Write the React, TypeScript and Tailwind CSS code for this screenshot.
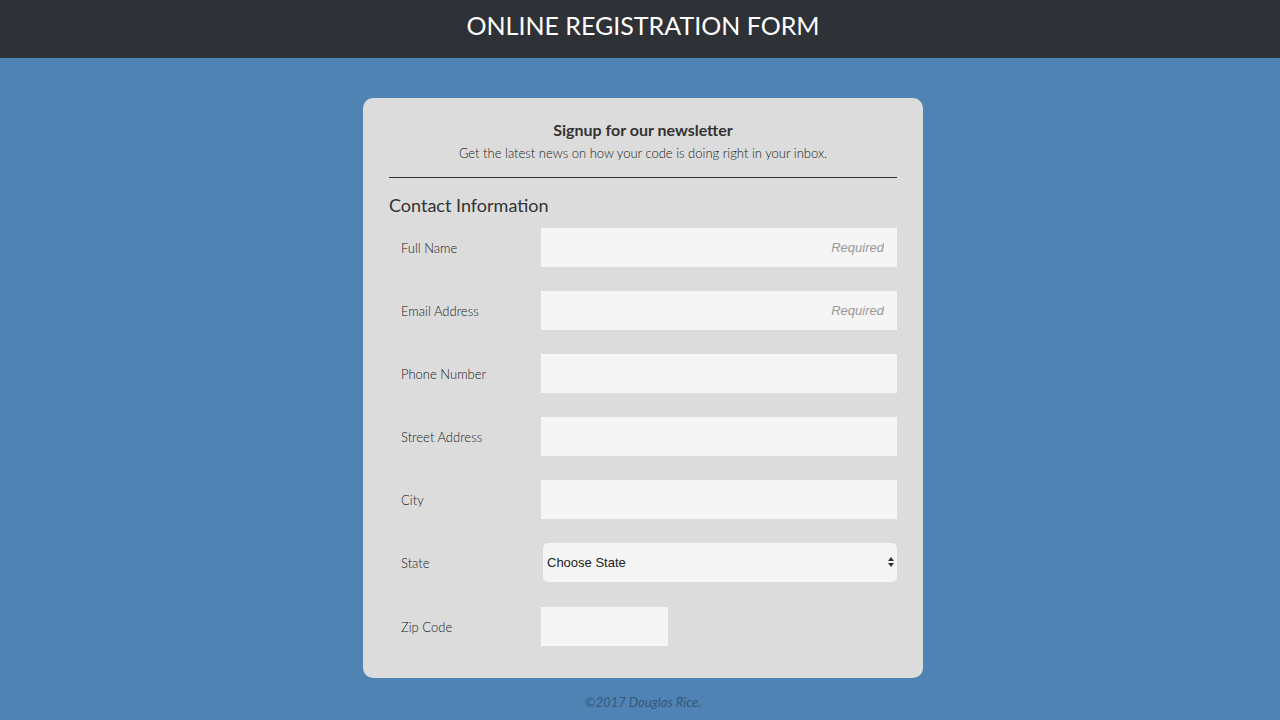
import React from "react";

const fields = [
  { label: "Full Name", required: true },
  { label: "Email Address", required: true },
  { label: "Phone Number" },
  { label: "Street Address" },
  { label: "City" },
];

export default function App() {
  return (
    <div className="min-h-screen bg-[#4f83b3] font-['Lato',sans-serif]">
      {/* header */}
      <div className="h-[58px] bg-[#2e3135] flex items-center justify-center pb-[7px] pl-[6px]">
        <h1 className="text-white text-[25px] leading-none">ONLINE REGISTRATION FORM</h1>
      </div>

      {/* card */}
      <div className="pt-10 pl-[6px] flex flex-col items-center">
        <div className="w-[560px] bg-[#dcdcdc] rounded-[10px] px-[26px] pt-[22px] pb-[32px]">
          <div className="text-center text-[#333]">
            <h2 className="font-bold text-[16px] leading-5">Signup for our newsletter</h2>
            <p className="text-[13px] leading-5 mt-[3px] font-light text-[#222]">Get the latest news on how your code is doing right in your inbox.</p>
          </div>
          <div className="border-t border-[#333] mt-[14px]" />
          <h3 className="text-[18px] text-[#333] mt-[16px] leading-[22px]">Contact Information</h3>

          <div className="mt-[12px] flex flex-col gap-6">
            {fields.map((f) => (
              <div key={f.label} className="flex items-center">
                <label className="w-[152px] pl-3 pt-[2px] text-[13px] font-light text-[#222]">{f.label}</label>
                <input
                  className="w-[356px] h-[39px] bg-[#f5f5f5] outline-none px-[13px] text-right text-[13px] italic font-['Liberation_Sans',sans-serif] placeholder:text-[#999]"
                  placeholder={f.required ? "Required" : ""}
                />
              </div>
            ))}
            <div className="flex items-center">
              <label className="w-[152px] pl-3 pt-[2px] text-[13px] font-light text-[#222]">State</label>
              <div className="relative ml-[2px] w-[354px] h-[39px] bg-[#f5f5f5] rounded-[5px] flex items-center">
                <span className="pl-[4px] text-[13px] text-[#222] font-['Liberation_Sans',sans-serif]">Choose State</span>
                <svg className="absolute right-[3px] top-[13px]" width="6" height="12" viewBox="0 0 6 12">
                  <path d="M3 1 L6 5 L0 5 Z M0 7 L6 7 L3 11 Z" fill="#333" />
                </svg>
              </div>
            </div>
            <div className="flex items-center pt-[1px]">
              <label className="w-[152px] pl-3 pt-[2px] text-[13px] font-light text-[#222]">Zip Code</label>
              <input className="w-[127px] h-[39px] bg-[#f5f5f5] outline-none" />
            </div>
          </div>
        </div>
        <p className="mt-[15px] text-[13px] italic text-[#34587c]">©2017 Douglas Rice.</p>
      </div>
    </div>
  );
}
